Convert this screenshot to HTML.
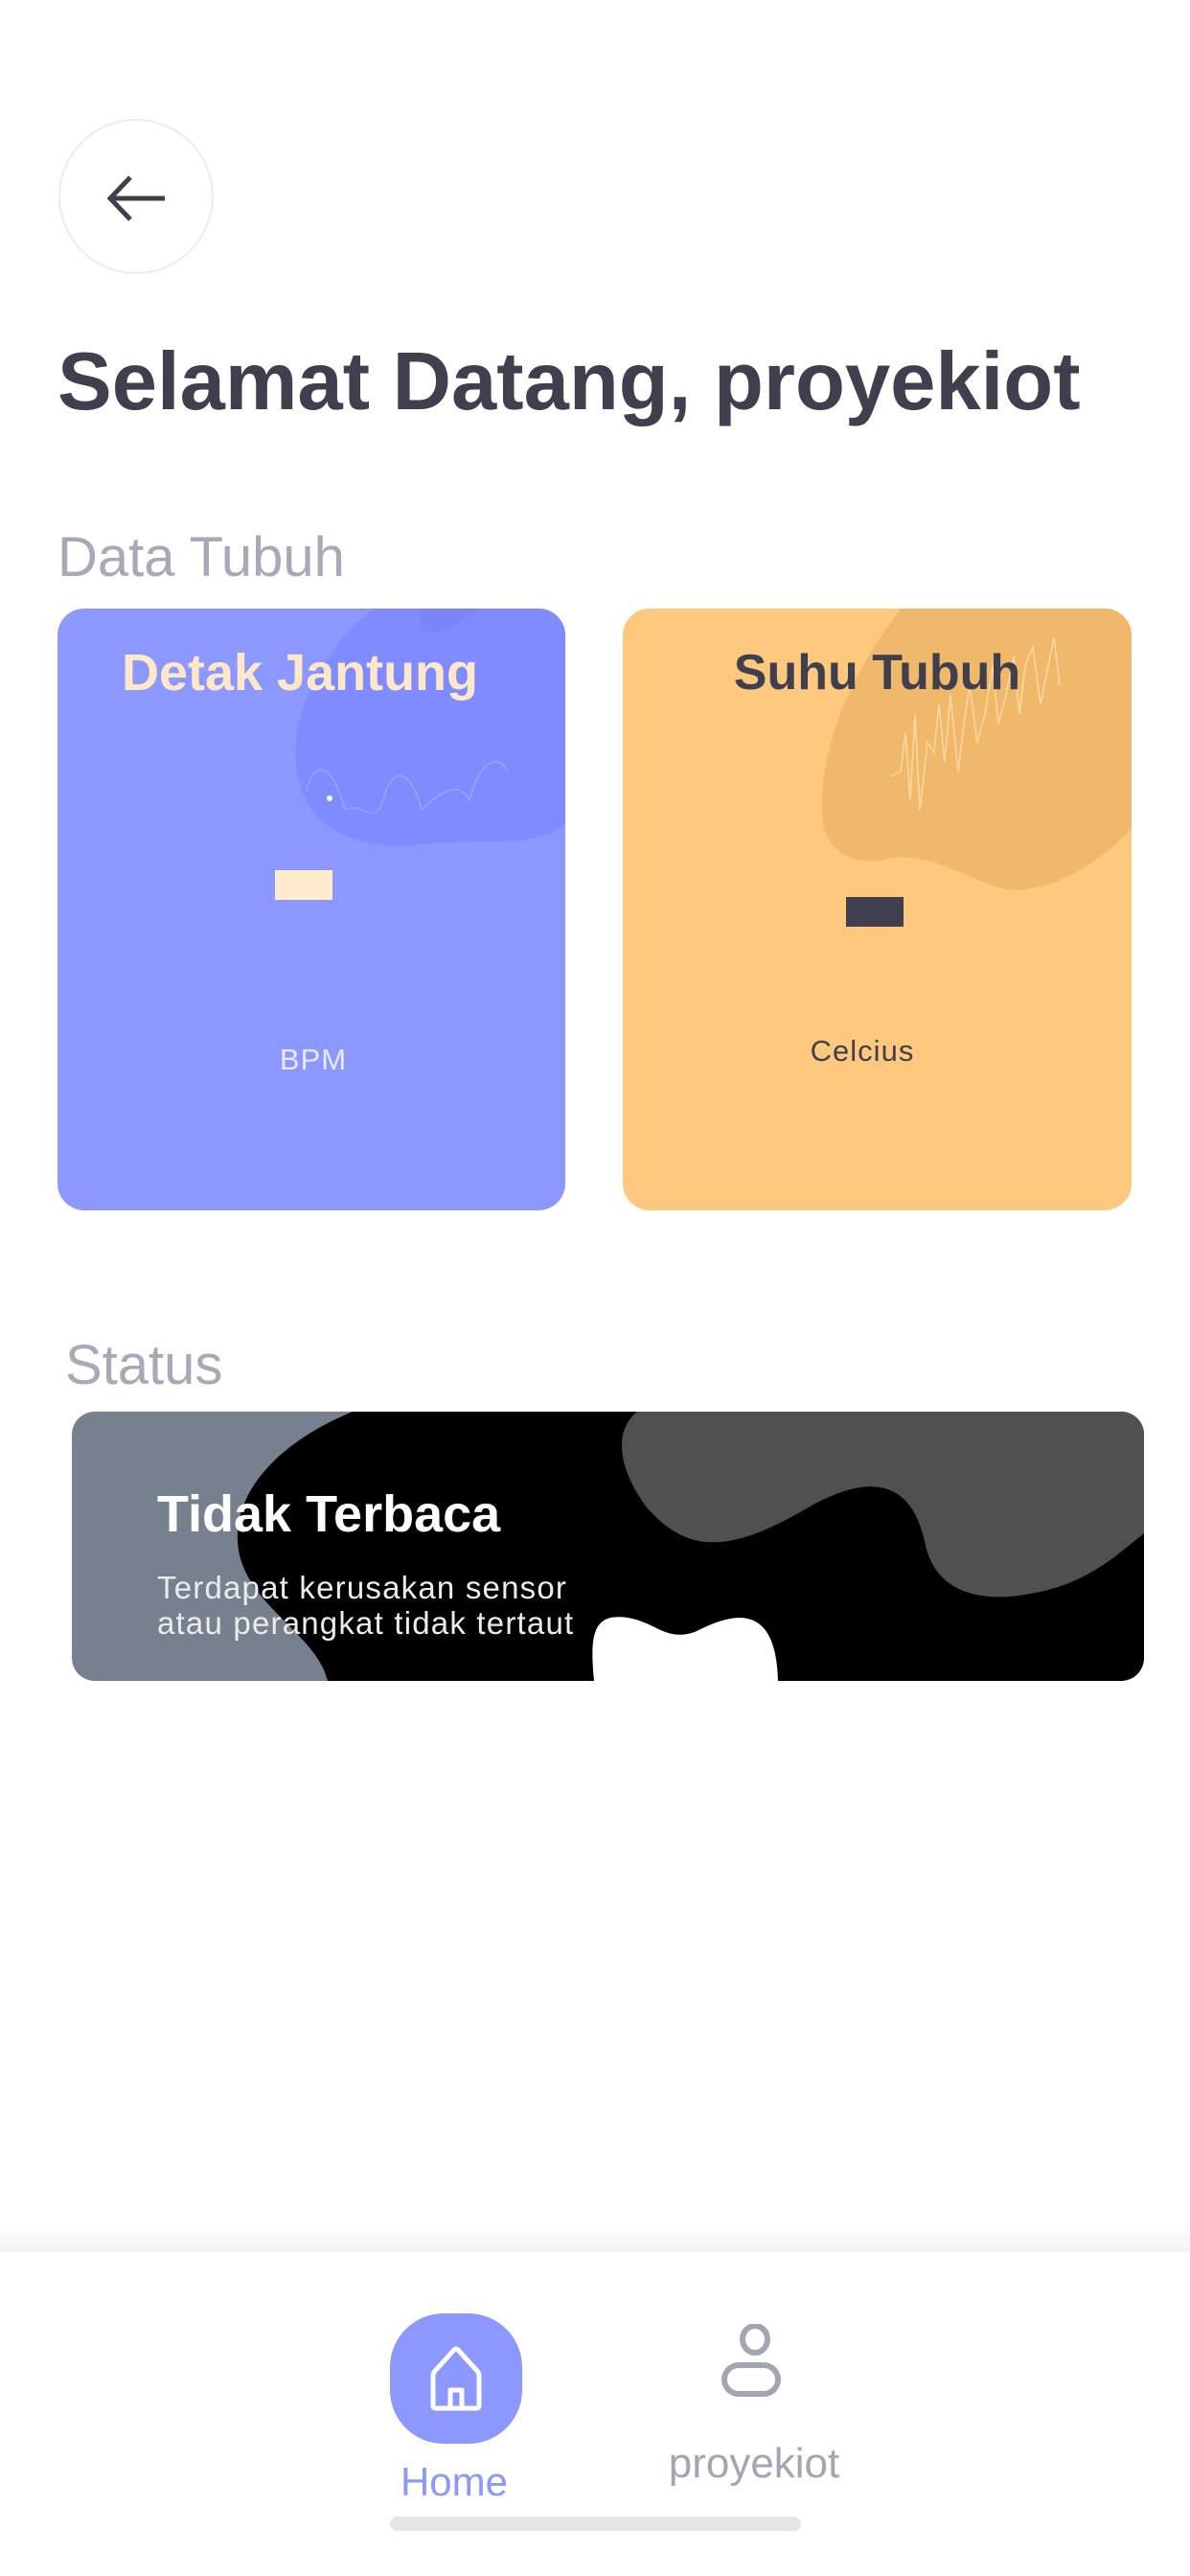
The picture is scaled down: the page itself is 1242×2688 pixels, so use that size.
<!DOCTYPE html>
<html><head><meta charset="utf-8"><style>
*{margin:0;padding:0;box-sizing:border-box}
body{width:1242px;height:2688px;background:#fff;position:relative;overflow:hidden;font-family:"Liberation Sans",sans-serif}
.a{position:absolute;white-space:nowrap}
</style></head><body>
<div class="a" style="left:61px;top:124px;width:162px;height:162px;border:2px solid #ececec;border-radius:50%"></div>
<svg class="a" style="left:100px;top:165px" width="84" height="84" viewBox="0 0 84 84"><path d="M72 42H16M36 20L15 42L36 64" fill="none" stroke="#3f3f4e" stroke-width="5"/></svg>
<div class="a" style="left:60px;top:350px;font-size:85px;font-weight:bold;color:#3f3f4e">Selamat Datang, proyekiot</div>
<div class="a" style="left:60px;top:548px;font-size:58px;font-weight:300;color:#a7a9b7">Data Tubuh</div>

<div class="a" style="left:60px;top:635px;width:530px;height:628px;border-radius:28px;background:#8c98fe;overflow:hidden">
<svg class="a" style="left:0;top:0" width="530" height="628"><path d="M330 0C280 40 240 110 250 170C260 230 310 255 390 245C450 240 500 250 530 225V0Z" fill="#7f8bfe"/><path d="M380 0C370 30 400 30 420 15L440 0Z" fill="#7a86f8"/><path d="M260 190C270 150 290 170 300 210M300 210C320 200 330 230 340 200C350 160 370 170 380 210M380 210C400 190 420 180 430 200C440 160 460 150 470 170" fill="none" stroke="#9aa5ff" stroke-width="1.5"/><circle cx="284" cy="198" r="3" fill="#fff"/></svg>
<div class="a" style="left:0;width:506px;text-align:center;top:36px;font-size:54px;font-weight:bold;color:#ffe8c8">Detak Jantung</div>
<div class="a" style="left:227px;top:273px;width:60px;height:31px;background:#ffeacc"></div>
<div class="a" style="left:0;width:530px;text-align:center;padding-left:4px;top:453px;font-size:31px;color:#eaeaff;letter-spacing:1px">BPM</div>
</div>

<div class="a" style="left:650px;top:635px;width:531px;height:628px;border-radius:28px;background:#fec87e;overflow:hidden">
<svg class="a" style="left:0;top:0" width="531" height="628"><path d="M290 0C230 80 200 160 210 230C220 260 250 270 280 260C340 255 380 300 420 293C480 285 520 240 531 230V0Z" fill="#f0b86b"/><path d="M280 175L290 170L295 130L300 200L305 110L310 210L318 140L325 150L330 100L336 160L342 90L350 170L356 120L362 80L370 140L378 110L386 60L392 120L400 90L408 50L414 110L420 60L428 40L436 100L442 70L450 30L456 80" fill="none" stroke="#ffd9a0" stroke-width="1.5"/></svg>
<div class="a" style="left:0;width:531px;text-align:center;top:37px;font-size:52px;font-weight:bold;color:#3f3f4e">Suhu Tubuh</div>
<div class="a" style="left:233px;top:301px;width:60px;height:31px;background:#3f3f4e"></div>
<div class="a" style="left:0;width:500px;text-align:center;top:444px;font-size:31px;color:#3f3f4e;letter-spacing:1px">Celcius</div>
</div>

<div class="a" style="left:68px;top:1391px;font-size:58px;font-weight:300;color:#a7a9b7">Status</div>
<div class="a" style="left:75px;top:1473px;width:1119px;height:281px;border-radius:24px;background:#76808f;overflow:hidden">
<svg class="a" style="left:0;top:0" width="1119" height="281"><path d="M293 0C220 30 170 80 173 135C176 200 255 230 267 281H1119V0Z" fill="#000"/><path d="M590 0C565 20 570 60 600 100C640 145 680 150 760 105C850 50 880 90 890 135C900 190 950 200 1000 190C1060 180 1090 150 1119 127V0Z" fill="#505050"/><path d="M545 281C540 230 545 210 580 215C610 220 620 240 650 230C680 215 735 190 737 281Z" fill="#fff"/></svg>
<div class="a" style="left:89px;top:76px;font-size:54px;font-weight:bold;color:#fff">Tidak Terbaca</div>
<div class="a" style="left:89px;top:165px;font-size:33px;line-height:37px;color:#ececec;letter-spacing:1.2px">Terdapat kerusakan sensor<br>atau perangkat tidak tertaut</div>
</div>

<div class="a" style="left:0;top:2320px;width:1242px;height:30px;background:linear-gradient(#fff,#f3f3f3)"></div>
<div class="a" style="left:0;top:2350px;width:1242px;height:338px;background:#fff"></div>
<div class="a" style="left:407px;top:2414px;width:138px;height:136px;border-radius:56px;background:#8c98fe"></div>
<svg class="a" style="left:436px;top:2442px" width="80" height="80" viewBox="0 0 80 80"><path d="M16 68V37Q16 34 18 32L38 10Q40 8 42 10L62 32Q64 34 64 37V68Q64 71 61 71H19Q16 71 16 68ZM34 71V52H46V71" fill="none" stroke="#fff" stroke-width="5" stroke-linejoin="round"/></svg>
<div class="a" style="left:374px;width:200px;text-align:center;top:2566px;font-size:42px;color:#8c98fe">Home</div>
<svg class="a" style="left:750px;top:2425px" width="76" height="80" viewBox="0 0 76 80"><ellipse cx="38" cy="16" rx="13" ry="14" fill="none" stroke="#a3a6b2" stroke-width="6"/><rect x="6" y="43" width="56" height="30" rx="15" fill="none" stroke="#a3a6b2" stroke-width="6"/></svg>
<div class="a" style="left:667px;width:240px;text-align:center;top:2546px;font-size:44px;color:#a3a6b2">proyekiot</div>
<div class="a" style="left:407px;top:2626px;width:429px;height:15px;border-radius:8px;background:#e5e5e5"></div>
</body></html>
